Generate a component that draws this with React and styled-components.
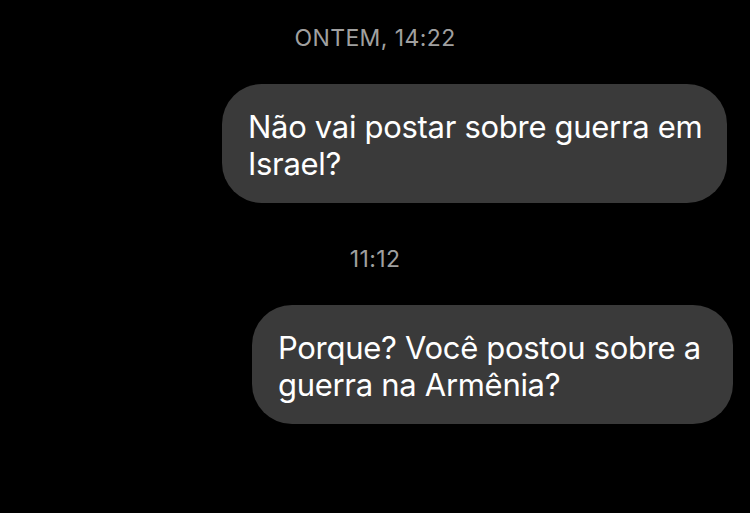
import React from "react";
import styled, { createGlobalStyle } from "styled-components";

const GlobalStyle = createGlobalStyle`
  html, body {
    margin: 0;
    padding: 0;
    background-color: #000000;
  }
  body {
    font-family: Inter, "Noto Sans", "Liberation Sans", sans-serif;
    -webkit-font-smoothing: antialiased;
  }
`;

const Screen = styled.div`
  width: 750px;
  height: 513px;
  background-color: #000000;
  display: flex;
  flex-direction: column;
  padding-top: 26px;
  box-sizing: border-box;
  overflow: hidden;
`;

const TimeStamp = styled.div`
  align-self: center;
  color: #a0a0a0;
  font-size: 23px;
  line-height: 24px;
  letter-spacing: 0.4px;
  margin-bottom: 34px;
`;

const Bubble = styled.div`
  align-self: flex-end;
  box-sizing: border-box;
  width: ${(props) => props.width}px;
  margin-right: ${(props) => props.right}px;
  margin-bottom: ${(props) => props.bottom || 0}px;
  padding: 24px 26px 21px;
  background-color: #3a3a3a;
  border-radius: 40px;
  color: #ffffff;
  font-size: 31px;
  line-height: 37px;
  letter-spacing: -0.3px;
  white-space: nowrap;
`;

export default function App() {
  return (
    <>
      <GlobalStyle />
      <Screen>
        <TimeStamp>ONTEM, 14:22</TimeStamp>
        <Bubble width={505} right={23} bottom={44}>
          Não vai postar sobre guerra em
          <br />
          Israel?
        </Bubble>
        <TimeStamp>11:12</TimeStamp>
        <Bubble width={481} right={17}>
          Porque? Você postou sobre a
          <br />
          guerra na Armênia?
        </Bubble>
      </Screen>
    </>
  );
}
